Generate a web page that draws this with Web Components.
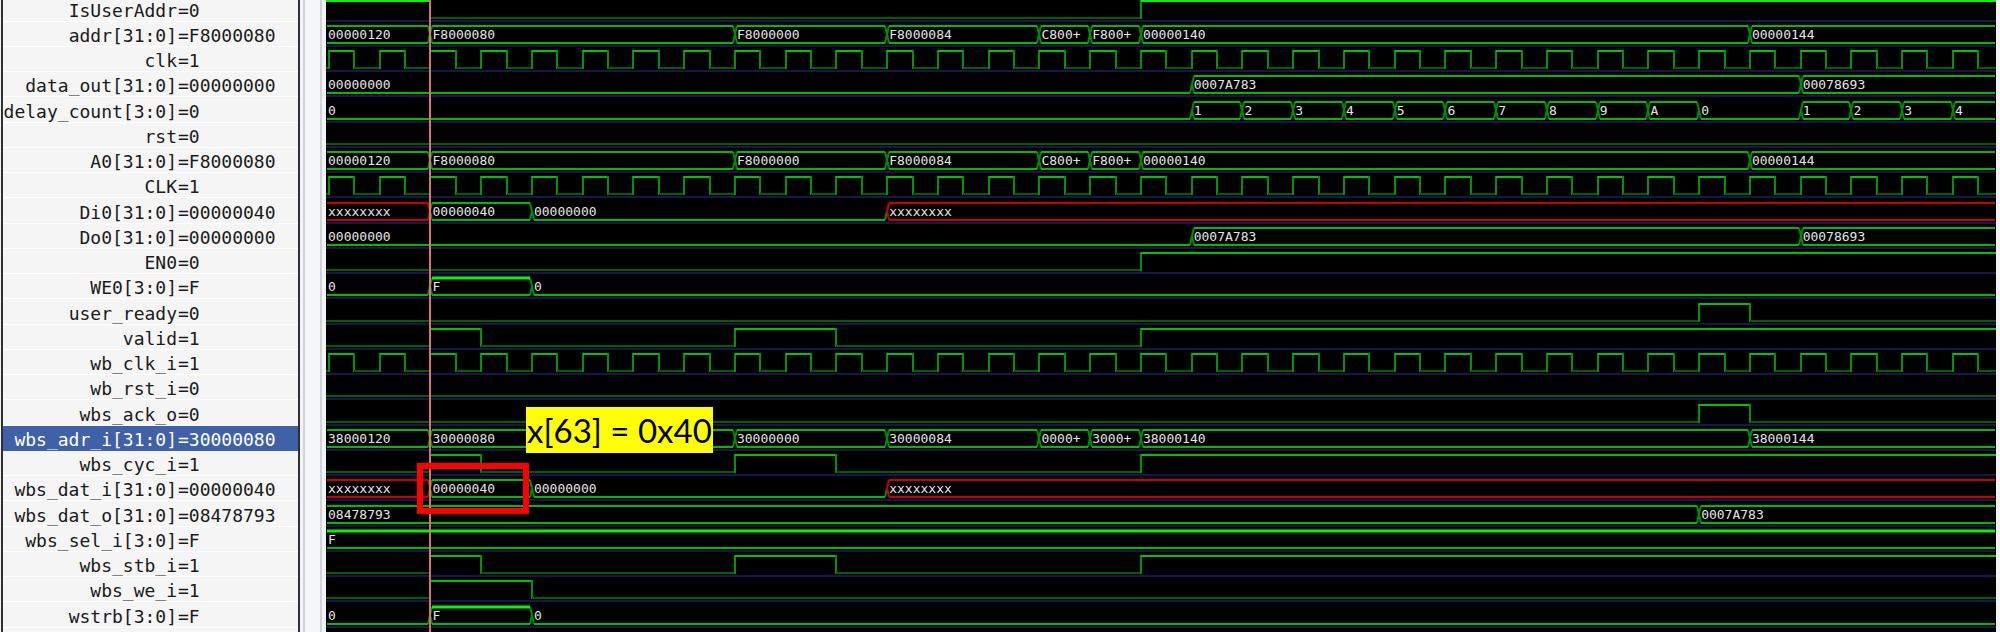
<!DOCTYPE html>
<html lang="en">
<head>
<meta charset="utf-8">
<title>Waveform viewer</title>
<style>
  html, body { margin: 0; background: #f5f5f5; }
  body { font-family: "DejaVu Sans Mono", monospace; }
</style>
</head>
<body>
<wave-viewer></wave-viewer>
<script>
// Time is counted in clock periods; the visible span ends a little before period 33.
const SPAN = 32.85;
const LEAD = 3;

const CLOCK = { kind: 'clock' };
const LOW = { kind: 'bit', start: 0, edges: [] };
const bit = (start, ...edges) => ({ kind: 'bit', start, edges });
const bus = (...parts) => ({ kind: 'bus', parts });

const VALID = bit(0, 2, 3, 8, 10, 16);
const ADDR = bus([0, '00000120'], [2, 'F8000080'], [8, 'F8000000'], [11, 'F8000084'], [14, 'C800+'], [15, 'F800+'], [16, '00000140'], [28, '00000144']);
const DOUT = bus([0, '00000000'], [17, '0007A783'], [29, '00078693']);
const DIN = bus([0, 'xxxxxxxx'], [2, '00000040'], [4, '00000000'], [11, 'xxxxxxxx']);
const STROBE = bus([0, '0'], [2, 'F'], [4, '0']);

const SIGNALS = [
  ['IsUserAddr', '0', bit(1, 2, 16)],
  ['addr[31:0]', 'F8000080', ADDR],
  ['clk', '1', CLOCK],
  ['data_out[31:0]', '00000000', DOUT],
  ['delay_count[3:0]', '0', bus([0, '0'], [17, '1'], [18, '2'], [19, '3'], [20, '4'], [21, '5'], [22, '6'], [23, '7'], [24, '8'], [25, '9'], [26, 'A'], [27, '0'], [29, '1'], [30, '2'], [31, '3'], [32, '4'])],
  ['rst', '0', LOW],
  ['A0[31:0]', 'F8000080', ADDR],
  ['CLK', '1', CLOCK],
  ['Di0[31:0]', '00000040', DIN],
  ['Do0[31:0]', '00000000', DOUT],
  ['EN0', '0', bit(0, 16)],
  ['WE0[3:0]', 'F', STROBE],
  ['user_ready', '0', bit(0, 27, 28)],
  ['valid', '1', VALID],
  ['wb_clk_i', '1', CLOCK],
  ['wb_rst_i', '0', LOW],
  ['wbs_ack_o', '0', bit(0, 27, 28)],
  ['wbs_adr_i[31:0]', '30000080', bus([0, '38000120'], [2, '30000080'], [8, '30000000'], [11, '30000084'], [14, '0000+'], [15, '3000+'], [16, '38000140'], [28, '38000144'])],
  ['wbs_cyc_i', '1', VALID],
  ['wbs_dat_i[31:0]', '00000040', DIN],
  ['wbs_dat_o[31:0]', '08478793', bus([0, '08478793'], [27, '0007A783'])],
  ['wbs_sel_i[3:0]', 'F', bus([0, 'F'])],
  ['wbs_stb_i', '1', VALID],
  ['wbs_we_i', '1', bit(0, 2, 4)],
  ['wstrb[3:0]', 'F', STROBE]
];
const SELECTED = 17;

// Row rhythm shared by the name list and the traces.
const ROWS = `
  .rows { display: flex; flex-direction: column; }
  .rows > * { height: 25px; flex: none; }
  .rows > :nth-child(4n + 1) { height: 26px; }
  .rows > :first-child { height: 22px; }
`;

customElements.define('signal-name', class extends HTMLElement {
  connectedCallback() {
    this.attachShadow({ mode: 'open' }).innerHTML = `
      <style>
        :host { display: flex; align-items: flex-end; gap: 1px; box-sizing: border-box;
          font-size: 18px; line-height: 21px; color: #1a1a1a; white-space: nowrap;
          border-bottom: 1px solid #fff; }
        :host([selected]) { background: #4060a8; color: #fff; border-color: #4060a8; overflow: hidden; position: relative; }
        .name { width: 174px; flex: none; display: flex; justify-content: flex-end; }
      </style>
      <span class="name"><slot></slot></span><span>=<slot name="value"></slot></span>`;
  }
});

customElements.define('signal-list', class extends HTMLElement {
  connectedCallback() {
    this.attachShadow({ mode: 'open' }).innerHTML = `
      <style>
        :host { display: block; flex: none; width: 295px; margin-left: 1px; background: #f5f5f5;
          border: solid #303034; border-width: 0 2px; overflow: hidden; }
        ${ROWS}
      </style>
      <div class="rows">${SIGNALS.map(([n, v], i) =>
        `<signal-name${i === SELECTED ? ' selected' : ''}>${n}<span slot="value">${v}</span></signal-name>`).join('')}</div>`;
  }
});

customElements.define('wave-trace', class extends HTMLElement {
  connectedCallback() {
    const root = this.attachShadow({ mode: 'open' });
    const sig = this.signal = SIGNALS[+this.getAttribute('index')][2];
    const parts = sig.kind === 'bus' ? sig.parts : [];
    root.innerHTML = `
      <style>
        :host { display: flex; align-items: flex-end; position: relative; overflow: hidden; box-sizing: border-box;
          border-bottom: 2px solid #15154f; color: #e4e4e4; font-size: 13px; line-height: 21px; }
        svg { position: absolute; left: 0; bottom: 0; width: 100%; height: 23px; }
        span { position: relative; flex: 1 1 0; min-width: 0; text-indent: 2px; white-space: nowrap; }
        path { fill: none; stroke-width: 2; }
        .high { stroke: #00c400; } .low { stroke: #006000; } .edge { stroke: #009400; }
        .bus { stroke: #00bc00; } .cap { stroke: #008c00; } .full { stroke: #00f800; stroke-width: 3; }
        .x { stroke: #cc0000; }
        :host([index="0"]) .high { stroke: #00f800; }
      </style>
      <svg aria-hidden="true"></svg>
      ${parts.map(([t, v], i) => {
        const end = i + 1 < parts.length ? parts[i + 1][0] : SPAN;
        return `<span style="flex-grow:${end - t};flex-basis:${i ? 0 : LEAD}px">${v}</span>`;
      }).join('')}`;
    this.draw();
    new ResizeObserver(() => this.draw()).observe(this);
  }
  draw() {
    const w = this.clientWidth;
    const at = t => Math.round(LEAD + t * (w - LEAD) / SPAN);
    const top = 4, bot = 21, mid = 12;
    const out = [];
    const line = (cls, d) => out.push(`<path class="${cls}" d="${d}"/>`);
    const sig = this.signal;
    if (sig.kind === 'bus') {
      sig.parts.forEach(([t, v], i) => {
        const last = i === sig.parts.length - 1;
        const a = i ? at(t) : 1, b = last ? w - 1 : at(sig.parts[i + 1][0]);
        const l = i ? a + 2 : a, r = last ? b : b - 2;
        const isX = v[0] === 'x', zero = /^0+$/.test(v);
        const cap = isX ? 'x' : 'cap';
        const rails = zero ? [bot] : [top, bot];
        for (const y of rails) {
          if (i) line(cap, `M${a} ${mid}L${l} ${y}`);
          if (!last) line(cap, `M${r} ${y}L${b} ${mid}`);
        }
        for (const y of rails)
          line(isX ? 'x' : v === 'F' && y === top ? 'full' : 'bus', `M${l} ${y}H${r}`);
      });
    } else {
      let edges = sig.edges, level = sig.start;
      if (sig.kind === 'clock') {
        edges = []; level = 0;
        for (let t = 0; t < SPAN; t += 0.5) edges.push(t);
      }
      let x = 0;
      for (const e of [...edges, null]) {
        const nx = e === null ? w : at(e);
        line(level ? 'high' : 'low', `M${x} ${level ? top : bot}H${nx}`);
        if (e !== null) line('edge', `M${nx} ${top - 1}V${bot + 1}`);
        level = 1 - level; x = nx;
      }
    }
    this.shadowRoot.querySelector('svg').innerHTML = out.join('');
  }
});

customElements.define('wave-pane', class extends HTMLElement {
  connectedCallback() {
    this.attachShadow({ mode: 'open' }).innerHTML = `
      <style>
        :host { display: block; flex: 1; min-width: 0; position: relative; background: #000; overflow: hidden; }
        ${ROWS}
        .cursor, ::slotted(*) { position: absolute; left: calc(${LEAD}px + (100% - ${LEAD}px) * var(--t) / ${SPAN}); }
        .cursor { --t: 2; top: 0; bottom: 0; width: 2px; margin-left: -1px; background: #e07070; }
      </style>
      <div class="rows">${SIGNALS.map((s, i) => `<wave-trace index="${i}"></wave-trace>`).join('')}</div>
      <div class="cursor"></div>
      <slot></slot>`;
  }
});

customElements.define('wave-note', class extends HTMLElement {
  connectedCallback() {
    this.attachShadow({ mode: 'open' }).innerHTML = `
      <style>
        :host { display: block; box-sizing: border-box; width: 187px; height: 46px; background: #ff0; color: #000;
          font-family: Lato, sans-serif; font-size: 33px; line-height: 46px; text-align: center; white-space: nowrap; }
      </style><slot></slot>`;
  }
});

customElements.define('wave-frame', class extends HTMLElement {
  connectedCallback() {
    this.attachShadow({ mode: 'open' }).innerHTML = `
      <style>
        :host { display: block; box-sizing: border-box; width: 112px; height: 51px; border: 6px solid #f00; }
      </style>`;
  }
});

customElements.define('wave-viewer', class extends HTMLElement {
  connectedCallback() {
    this.attachShadow({ mode: 'open' }).innerHTML = `
      <style>
        :host { display: flex; min-height: 100vh; padding-right: 4px; background: #f3f3f3; }
        .sash { flex: none; width: 15px; margin: 0 4px 0 3px; background: #f4f6f8; border: solid #cfd3da; border-width: 0 2px; }
        wave-note { --t: 3.88; top: 407px; }
        wave-frame { --t: 1.73; top: 463px; }
      </style>
      <signal-list></signal-list>
      <div class="sash"></div>
      <wave-pane>
        <wave-note>x[63] = 0x40</wave-note>
        <wave-frame></wave-frame>
      </wave-pane>`;
  }
});
</script>
</body>
</html>
